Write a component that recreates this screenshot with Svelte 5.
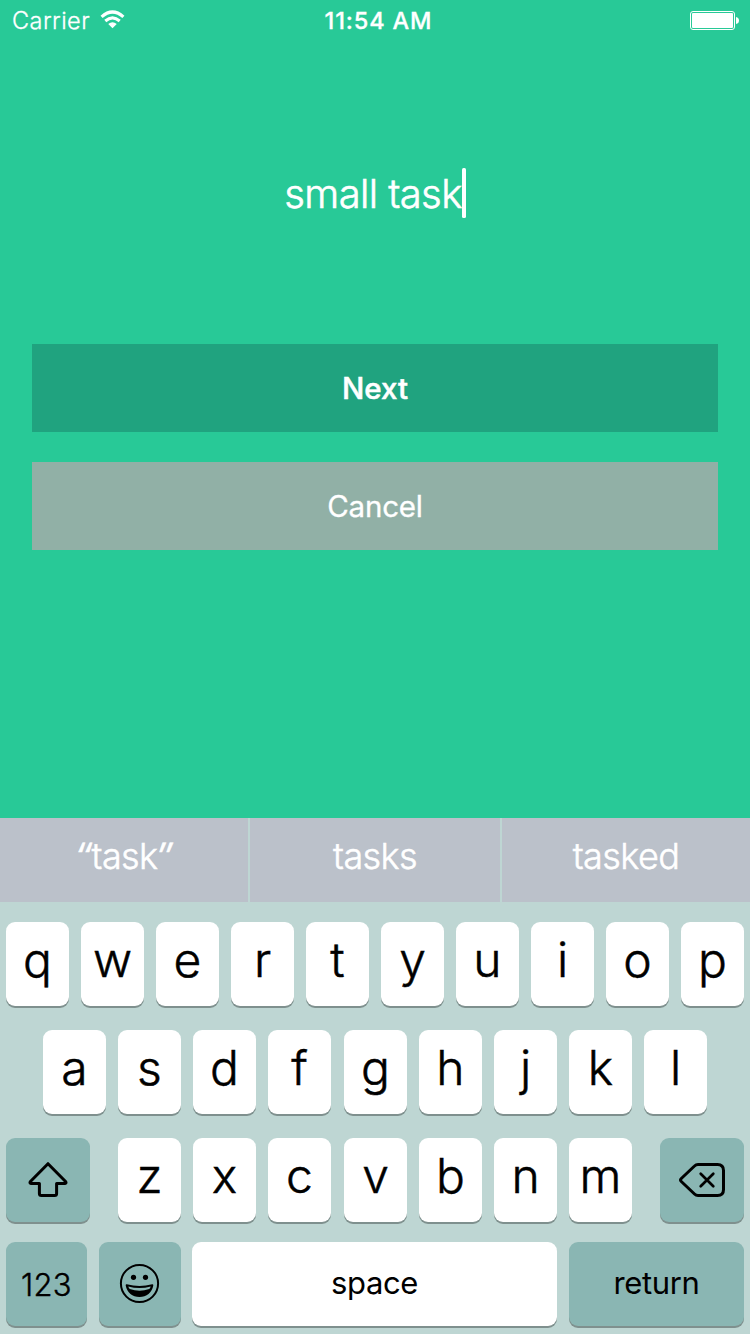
<script>
  const topRow = [...'qwertyuiop'];
  const homeRow = [...'asdfghjkl'];
  const lowRow = [...'zxcvbnm'];
</script>

<main class="screen">
  <header class="status">
    <div class="network">
      <span class="carrier">Carrier</span>
      <svg class="wifi" width="25" height="19" viewBox="0 0 26 20" fill="none">
        <path d="M1.5 7.300 Q13 -3.100 24.5 7.300" stroke="#fff" stroke-width="3.300" />
        <path d="M5.4 11.600 Q13 5 20.6 11.600" stroke="#fff" stroke-width="3.200" />
        <path d="M8.5 14.800 Q13 11.200 17.5 14.800 L13 19.300 Z" fill="#fff" />
      </svg>
    </div>
    <time class="clock">11:54 AM</time>
    <svg class="battery" width="50" height="20" viewBox="0 0 50 20">
      <rect x="0.5" y="0.5" width="44" height="18" rx="2.5" fill="none" stroke="#fff" />
      <rect x="2" y="2" width="41" height="15" rx="1" fill="#fff" />
      <path d="M46 6 Q49 6.500 49 9.500 T46 13 Z" fill="#fff" />
    </svg>
  </header>

  <section class="form">
    <div class="field"><span class="value">small task</span><i class="caret"></i></div>
    <button class="next">Next</button>
    <button class="cancel">Cancel</button>
  </section>

  <section class="keyboard">
    <div class="suggestions">
      <div><span class="quote open">“</span>task<span class="quote">”</span></div>
      <div>tasks</div>
      <div>tasked</div>
    </div>
    <div class="keys">
      <div class="row">
        {#each topRow as k}<button class="key">{k}</button>{/each}
      </div>
      <div class="row home">
        {#each homeRow as k}<button class="key" class:wide-gap={k === 'f'}>{k}</button>{/each}
      </div>
      <div class="row low">
        <button class="key mod shift" aria-label="shift">
          <svg width="84" height="84" viewBox="0 0 84 84" fill="none" stroke="#000" stroke-width="3" stroke-linejoin="round">
            <path d="M42 25.700 L59.800 43.800 Q60.500 45.400 59.100 45.400 H50.600 V55.500 Q50.600 57.500 48.600 57.500 H35.400 Q33.400 57.500 33.400 55.500 V45.400 H24.900 Q23.500 45.400 24.200 43.800 Z" />
          </svg>
        </button>
        {#each lowRow as k}<button class="key" class:wide-gap={k === 'c'}>{k}</button>{/each}
        <button class="key mod delete" aria-label="delete">
          <svg width="84" height="84" viewBox="0 0 84 84" fill="none" stroke="#000" stroke-width="3" stroke-linejoin="round" stroke-linecap="round">
            <path d="M38 26.500 H57.500 Q63.500 26.500 63.500 32.500 V51.500 Q63.500 57.500 57.500 57.500 H38 Q36 57.500 34.500 56 L21.300 43.500 Q19.800 42 21.300 40.500 L34.500 28 Q36 26.500 38 26.500 Z" />
            <path d="M40.700 35.700 L53.300 48.300 M53.300 35.700 L40.700 48.300" stroke-width="2.700" />
          </svg>
        </button>
      </div>
      <div class="row bottom">
        <button class="key mod numbers">123</button>
        <button class="key mod emoji" aria-label="emoji">
          <svg width="82" height="84" viewBox="0 0 82 84">
            <circle cx="40.500" cy="41.500" r="18.600" fill="none" stroke="#000" stroke-width="2" />
            <circle cx="34.500" cy="35.300" r="2.600" />
            <circle cx="46.500" cy="35.300" r="2.600" />
            <path d="M27.800 42.300 Q40.500 45.600 53.200 42.300 Q54.400 42.100 54.300 43.500 C53 50.500 47.500 55 40.500 55 S28 50.500 26.700 43.500 Q26.600 42.100 27.800 42.300 Z" />
            <path d="M29.300 44.500 Q40.500 47.500 51.700 44.500 Q51.200 46 50.200 47 Q40.500 50.300 30.800 47 Q29.800 46 29.300 44.500 Z" fill="#8ab6b3" />
          </svg>
        </button>
        <button class="key space">space</button>
        <button class="key mod return">return</button>
      </div>
    </div>
  </section>
</main>

<style>
  :global(body) { margin: 0; }
  .screen {
    width: 750px; height: 1334px; overflow: hidden;
    display: flex; flex-direction: column;
    background: #28c997; color: #fff;
    font-family: Inter, "Liberation Sans", sans-serif;
  }
  button { border: 0; margin: 0; padding: 0; font: inherit; color: inherit; }
  svg { display: block; }

  .status {
    height: 40px; box-sizing: border-box; padding: 0 10px 0 12px;
    display: grid; grid-template-columns: 1fr auto 1fr; align-items: start;
    font-size: 23.500px; line-height: 41px; white-space: nowrap;
  }
  .network { display: flex; gap: 10px; }
  .carrier { font-weight: 300; letter-spacing: 0.450px; -webkit-text-stroke: 0.300px #fff; }
  .wifi { margin-top: 10px; }
  .clock { font-weight: 500; letter-spacing: 0.850px; padding-left: 5px; -webkit-text-stroke: 0.300px #fff; }
  .battery { justify-self: end; margin-top: 11px; }

  .form { height: 778px; padding: 0 32px; display: flex; flex-direction: column; }
  .field {
    height: 50px; margin: 128px 0 126px; display: flex; justify-content: center;
    font-size: 40px; line-height: 51px; font-weight: 300; white-space: nowrap;
    letter-spacing: -0.600px; -webkit-text-stroke: 0.600px #fff;
  }
  .caret { width: 4px; height: 50px; border-radius: 1.500px; background: #fff; }
  .next, .cancel { height: 88px; font-size: 29.500px; line-height: 88px; }
  .next { background: #20a37f; font-weight: 500; -webkit-text-stroke: 0.500px #fff; }
  .cancel { background: #91b0a6; margin-top: 30px; font-weight: 400; letter-spacing: -0.200px; -webkit-text-stroke: 0.300px #fff; }

  .keyboard { height: 516px; background: #bed6d3; }
  .suggestions {
    height: 84px; display: grid; grid-template-columns: 248px 250px 248px; column-gap: 2px;
    font-size: 36px; line-height: 77px; font-weight: 300; text-align: center;
    letter-spacing: -0.600px; -webkit-text-stroke: 0.500px #fff;
  }
  .suggestions div { background: #bbc1ca; white-space: nowrap; }
  .quote { display: inline-block; transform: skewX(-7deg) scaleX(1.200); }
  .quote.open { margin-right: 1px; }

  .keys { padding: 20px 6px 0; }
  .row { display: flex; gap: 12px; height: 84px; margin-bottom: 24px; }
  .home { padding-left: 37px; }
  .low { margin-bottom: 20px; }
  .key {
    flex: none; width: 63px; height: 84px; border-radius: 9px;
    background: #fff; color: #000; box-shadow: 0 2px 0 #7f908e;
    font-size: 48px; line-height: 75px; font-weight: 300; -webkit-text-stroke: 0.500px #000;
    display: flex; align-items: flex-start; justify-content: center;
  }
  .wide-gap { margin-right: 1px; }
  .mod { background: #8ab6b3; }
  .shift { width: 84px; margin-right: 16px; }
  .delete { width: 84px; margin-left: 16px; }
  .bottom .key { font-size: 31px; line-height: 81px; font-weight: 400; letter-spacing: -0.400px; -webkit-text-stroke: 0; }
  .bottom .numbers { width: 81px; line-height: 85px; font-weight: 300; letter-spacing: 0.300px; -webkit-text-stroke: 0.400px #000; }
  .emoji { width: 82px; }
  .space { width: 365px; margin-left: -1px; }
  .return { width: 175px; }
</style>
